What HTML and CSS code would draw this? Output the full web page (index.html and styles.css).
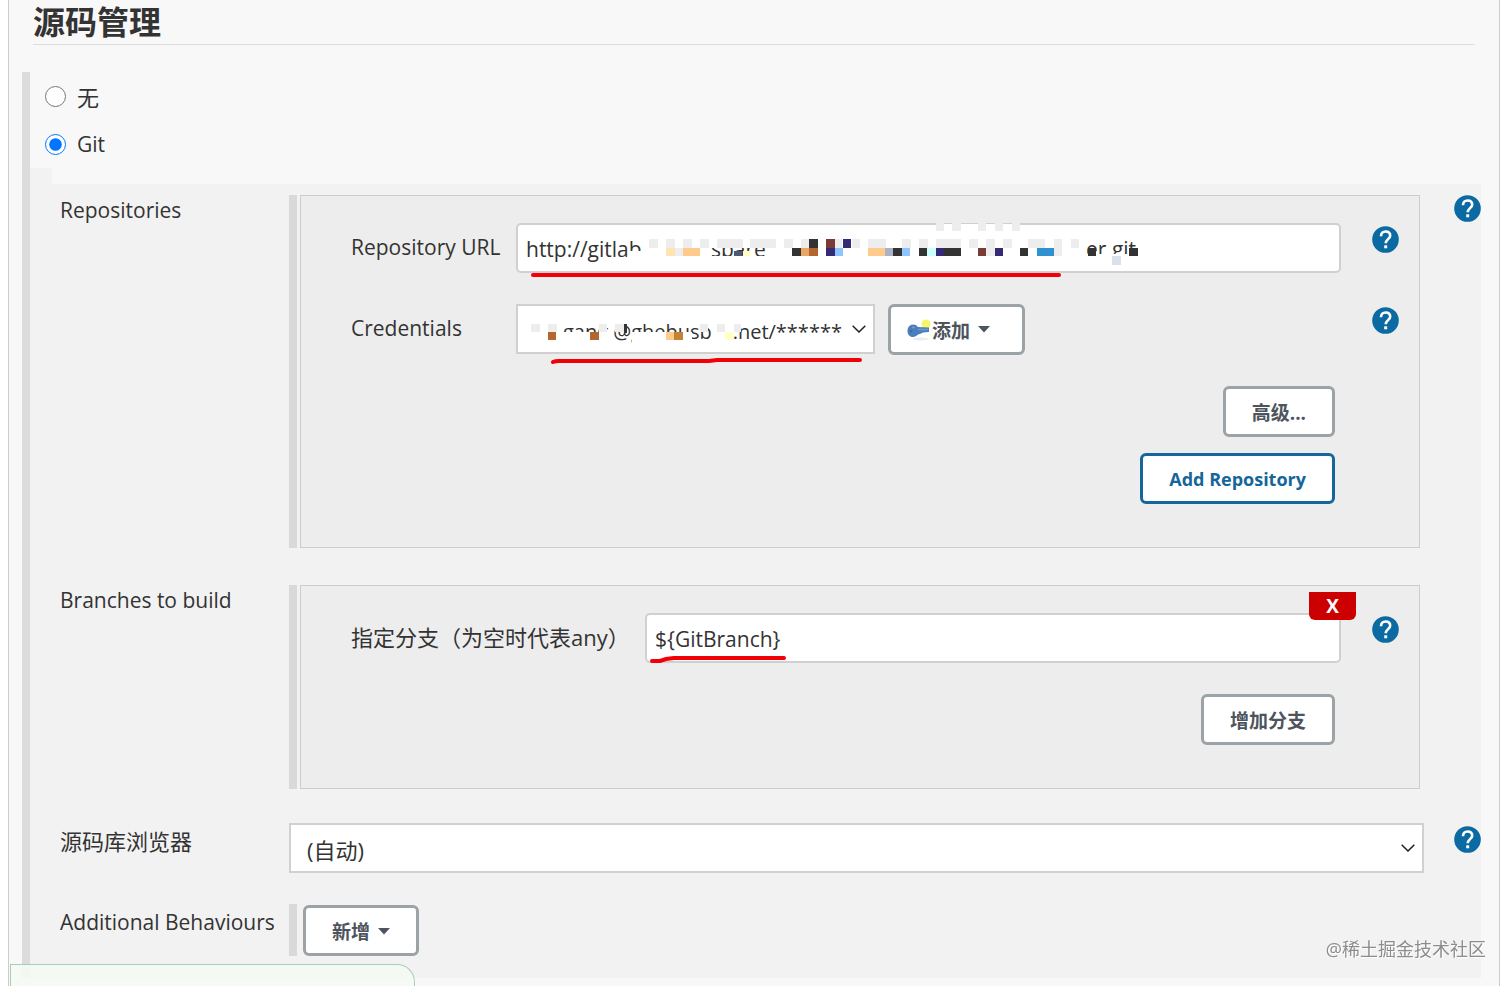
FILE: index.html
```html
<!DOCTYPE html>
<html lang="zh-CN">
<head>
    <meta charset="UTF-8">
    <meta name="viewport" content="width=device-width, initial-scale=1.0">
    <title>源码管理</title>
    <link rel="stylesheet" href="styles.css">
</head>
<body>
    <svg width="0" height="0" class="defs">
        <symbol id="help" viewBox="0 0 27 27">
            <circle cx="13.5" cy="13.5" r="13.3" fill="#0b6aa2"/>
            <path d="M9 10.200C9 7.200 10.800 5.500 13.600 5.500s4.600 1.700 4.600 4.200c0 3.200-4.500 3.800-4.500 7.500" fill="none" stroke="#fff" stroke-width="2.600"/>
            <rect x="12.200" y="19.300" width="3" height="3" fill="#fff"/>
        </symbol>
        <symbol id="chevron" viewBox="0 0 14 8">
            <path d="M.7.7 7 7 13.300.7" fill="none" stroke="#222" stroke-width="1.5"/>
        </symbol>
        <symbol id="caret" viewBox="0 0 12 7">
            <path d="M0 0h12L6 6.500z" fill="#4d545d"/>
        </symbol>
    </svg>
    <div class="main">
        <h2 class="title">源码管理</h2>
        <form class="scm">
            <label class="radio cjk"><input type="radio" name="scm">无</label>
            <label class="radio"><input type="radio" name="scm" checked>Git</label>
            <div class="git">
                <div class="row repo-row">
                    <div class="name">Repositories</div>
                    <div class="group">
                        <div class="panel">
                            <div class="field">
                                <label for="url">Repository URL</label>
                                <div class="control">
                                    <input class="text" type="text" id="url" value="http://gitlab">
                                    <svg class="cover" width="660" height="60" viewBox="0 0 660 60" shape-rendering="crispEdges">
                                        <text x="195" y="34">spare</text>
                                        <text x="570" y="34">er.git</text>
                                        <path fill="#fff" d="M114 28h16v8h-16zM190 14h70v11h-70zM190 33h70v10h-70zM560 31h64v12h-64zM420 1h84v14h-84z"/>
                                        <path fill="#ededed" d="M133 16h9v9h-9zM150 16h9v9h-9zM167 16h9v9h-9zM184 16h9v9h-9zM201 16h26v9h-26zM234 16h26v9h-26zM268 16h9v9h-9zM285 16h9v9h-9zM319 16h7v9h-7zM336 16h8v9h-8zM352 16h18v9h-18zM386 16h9v9h-9zM403 16h9v9h-9zM420 16h25v9h-25zM453 16h9v9h-9zM470 16h9v9h-9zM487 16h9v9h-9zM512 16h17v9h-17zM538 16h8v9h-8zM555 16h8v9h-8zM420 0h8v8h-8zM436 0h9v8h-9zM462 0h8v8h-8zM479 0h8v8h-8zM496 0h8v8h-8zM159 25h8v8h-8zM470 25h9v8h-9zM538 25h8v8h-8z"/>
                                        <path fill="#ffe4b0" d="M150 25h9v8h-9z"/>
                                        <path fill="#ffcb8c" d="M167 25h17v8h-17zM352 25h17v8h-17z"/>
                                        <path fill="#4a5a78" d="M218 28h8v5h-8z"/>
                                        <path fill="#ffffc8" d="M227 28h8v5h-8z"/>
                                        <path fill="#e9a766" d="M285 25h8v8h-8z"/>
                                        <path fill="#b3672f" d="M293 25h9v8h-9z"/>
                                        <path fill="#7a3a35" d="M310 16h9v9h-9zM462 25h8v8h-8z"/>
                                        <path fill="#342a75" d="M327 16h8v9h-8zM310 25h9v8h-9zM420 25h8v8h-8zM479 25h8v8h-8z"/>
                                        <path fill="#8cc5ff" d="M319 25h8v8h-8zM386 25h8v8h-8z"/>
                                        <path fill="#a9b2c8" d="M369 25h8v8h-8z"/>
                                        <path fill="#ccffff" d="M411 25h9v8h-9z"/>
                                        <path fill="#333" d="M293 16h9v9h-9zM276 25h9v8h-9zM377 25h9v8h-9zM403 25h8v8h-8zM428 25h17v8h-17zM504 25h8v8h-8zM572 25h8v8h-8zM613 25h9v8h-9z"/>
                                        <path fill="#2f91d0" d="M521 25h17v8h-17z"/>
                                        <path fill="#dbe1ea" d="M596 33h9v9h-9z"/>
                                        <path class="pen" d="M17 52h526"/>
                                    </svg>
                                </div>
                                <svg class="help"><use href="#help"/></svg>
                            </div>
                            <div class="field">
                                <label for="cred">Credentials</label>
                                <div class="inline">
                                    <div class="control cred">
                                        <select id="cred"><option>gang @ghebusb&nbsp;&nbsp;&nbsp;&nbsp;.net/******</option></select>
                                        <svg class="chevron"><use href="#chevron"/></svg>
                                        <svg class="cover" width="358" height="64" viewBox="0 0 358 64" shape-rendering="crispEdges">
                                            <path fill="#fff" d="M44 28h50v14h-50zM116 28h60v14h-60z"/>
                                            <path fill="#ededed" d="M15 20h9v8h-9zM32 20h9v8h-9zM83 20h8v8h-8zM99 20h9v8h-9zM184 20h8v8h-8zM201 20h8v8h-8zM218 20h7v8h-7z"/>
                                            <path fill="#b3672f" d="M32 28h8v8h-8zM74 28h9v8h-9z"/>
                                            <path fill="#ffcb8c" d="M150 28h8v8h-8z"/>
                                            <path fill="#c28434" d="M158 28h9v8h-9z"/>
                                            <path fill="#ffffc8" d="M209 28h9v8h-9z"/>
                                            <path fill="#333" d="M108 20h3v9h-3z"/>
                                            <path class="pen" d="M37 58q2-1 6-1h150l8-1h143"/>
                                        </svg>
                                    </div>
                                    <button type="button" class="btn add">
                                        <svg width="25" height="22" viewBox="0 0 25 22">
                                            <ellipse cx="14" cy="20" rx="8" ry="1.500" fill="#ececec"/>
                                            <circle cx="19" cy="5" r="4.500" fill="#f8f568"/>
                                            <path d="M6 5.500c2.500 0 3.500.8 5 2.500L22 8.500v4.500l-6 .5-3 1.500-2 .5C9.500 17 8 18 6 18c-3.500 0-5.500-2.500-5.500-6S2.500 5.500 6 5.500z" fill="#4a7fbd"/>
                                            <path d="M5 8.500h3M11 10.500h10" stroke="#7299cb" stroke-width="1.500"/>
                                            <circle cx="4" cy="12" r="1.500" fill="#3a6bab"/>
                                        </svg>添加<svg class="caret"><use href="#caret"/></svg>
                                    </button>
                                </div>
                                <svg class="help"><use href="#help"/></svg>
                            </div>
                            <div class="actions">
                                <button type="button" class="btn">高级...</button>
                                <button type="button" class="btn primary">Add Repository</button>
                            </div>
                        </div>
                    </div>
                    <svg class="help"><use href="#help"/></svg>
                </div>
                <div class="row branch-row">
                    <div class="name">Branches to build</div>
                    <div class="group">
                        <div class="panel">
                            <div class="field branch">
                                <label class="cjk" for="branch">指定分支（为空时代表any）</label>
                                <div class="control">
                                    <input class="text" type="text" id="branch" value="${GitBranch}">
                                    <svg class="cover" width="160" height="54" viewBox="0 0 160 54"><path class="pen" d="M7 48h8l6-2 8-1h110"/></svg>
                                    <button type="button" class="close">X</button>
                                </div>
                                <svg class="help"><use href="#help"/></svg>
                            </div>
                            <div class="actions">
                                <button type="button" class="btn">增加分支</button>
                            </div>
                        </div>
                    </div>
                </div>
                <div class="row">
                    <label class="name low cjk" for="browser">源码库浏览器</label>
                    <div class="control">
                        <select id="browser" class="cjk"><option>(自动)</option></select>
                        <svg class="chevron"><use href="#chevron"/></svg>
                    </div>
                    <svg class="help low"><use href="#help"/></svg>
                </div>
                <div class="row last">
                    <div class="name low">Additional Behaviours</div>
                    <div class="group">
                        <button type="button" class="btn">新增<svg class="caret"><use href="#caret"/></svg></button>
                    </div>
                </div>
            </div>
        </form>
    </div>
    <div class="save-bar"></div>
    <div class="watermark">@稀土掘金技术社区</div>
</body>
</html>
```
FILE: styles.css
```css
*{
    box-sizing: border-box;
}
body{
    margin: 0;
    background-color: #fff;
    color: #333;
    font-family: "Open Sans", "Noto Sans CJK SC", sans-serif;
    font-size: 21px;
}
.defs{
    position: absolute;
}
.main{
    min-height: 100vh;
    margin: 0 12px 0 8px;
    background-color: #f8f8f8;
    border-left: 1px solid #ccc;
    border-right: 1px solid #ccc;
}
.title{
    margin: 0 24px;
    border-bottom: 1px solid #ddd;
    font-size: 32px;
    line-height: 44px;
}
.scm{
    margin: 27px 18px 0 13px;
    border-left: 8px solid #dcdcdc;
}
.radio{
    display: flex;
    align-items: center;
    height: 48px;
    padding-left: 15px;
    gap: 11px;
}
.radio input{
    width: 21px;
    height: 21px;
    margin: 0;
}
.git{
    background-color: #f2f2f2;
    padding-bottom: 22px;
}
.git::before{
    content: "";
    display: block;
    height: 16px;
    margin-left: 22px;
    margin-bottom: 11px;
    background-color: #f8f8f8;
}
.row{
    display: grid;
    grid-template-columns: 229px 1fr 57px;
    align-items: start;
    margin-left: 30px;
    margin-bottom: 31px;
}
.repo-row{
    margin-bottom: 37px;
}
.branch-row{
    margin-bottom: 34px;
}
.last{
    margin-bottom: 0;
}
.name{
    line-height: 30px;
}
.low{
    margin-top: 3px;
}
.help{
    width: 27px;
    height: 27px;
    justify-self: end;
}
.group{
    border-left: 8px solid #d9d9d9;
    padding: 0 4px 0 3px;
}
.last .group{
    padding: 1px 6px 0;
}
.panel{
    background-color: #ededed;
    border: 1px solid #ccc;
    padding: 27px 20px 43px 50px;
}
.field{
    display: grid;
    grid-template-columns: 165px 1fr 58px;
    align-items: start;
    margin-bottom: 31px;
}
.field.branch{
    grid-template-columns: 294px 1fr 58px;
}
.field label{
    line-height: 48px;
    white-space: nowrap;
}
.field .help{
    margin-top: 3px;
}
.control{
    position: relative;
}
.text, select{
    display: block;
    width: 100%;
    height: 50px;
    margin: 0;
    border: 2px solid #d0d0d0;
    background-color: #fff;
    color: #333;
    font: inherit;
}
.text{
    padding: 2px 8px 0;
    border-radius: 5px;
}
select{
    appearance: none;
    padding: 4px 16px 0;
}
.cjk, select.cjk{
    font-size: 22px;
}
.cred{
    width: 359px;
}
.cred select{
    padding-left: 45px;
    font-size: 20px;
}
.chevron{
    position: absolute;
    top: 21px;
    right: 9px;
    width: 14px;
    height: 8px;
}
.cover{
    position: absolute;
    left: 0;
    top: 0;
    pointer-events: none;
}
.cover text{
    fill: #333;
}
.pen{
    fill: none;
    stroke: #f20008;
    stroke-width: 4;
    stroke-linecap: round;
    shape-rendering: auto;
}
.inline{
    display: flex;
    gap: 13px;
}
.btn{
    height: 51px;
    padding: 0 26px;
    border: 3px solid #9ba3a7;
    border-radius: 6px;
    background-color: #fff;
    color: #4d545d;
    font: bold 19px "Open Sans", "Noto Sans CJK SC", sans-serif;
}
.btn.add{
    display: flex;
    align-items: center;
    width: 137px;
    padding: 0 16px;
}
.btn.primary{
    border-color: #15669a;
    color: #15669a;
    font-size: 18px;
}
.caret{
    width: 12px;
    height: 7px;
    margin-left: 8px;
    vertical-align: 4px;
}
.actions{
    display: flex;
    flex-direction: column;
    align-items: flex-end;
    gap: 16px;
    margin-right: 64px;
}
.close{
    position: absolute;
    top: -21px;
    right: -15px;
    width: 47px;
    height: 28px;
    padding: 0;
    border: 0;
    border-radius: 0 0 6px 6px;
    background-color: #c00;
    color: #fff;
    font: bold 19px "Open Sans", sans-serif;
}
.save-bar{
    position: fixed;
    left: 10px;
    bottom: 0;
    width: 405px;
    height: 22px;
    border: 1px solid #a9cdb8;
    border-bottom: 0;
    border-radius: 0 18px 0 0;
    background-color: rgba(245, 250, 243, 0.9);
}
.watermark{
    position: fixed;
    right: 26px;
    bottom: 24px;
    color: #8c8c8c;
    font-size: 18px;
    line-height: 26px;
    text-shadow: 1px 1px 0 #fff;
}
```
